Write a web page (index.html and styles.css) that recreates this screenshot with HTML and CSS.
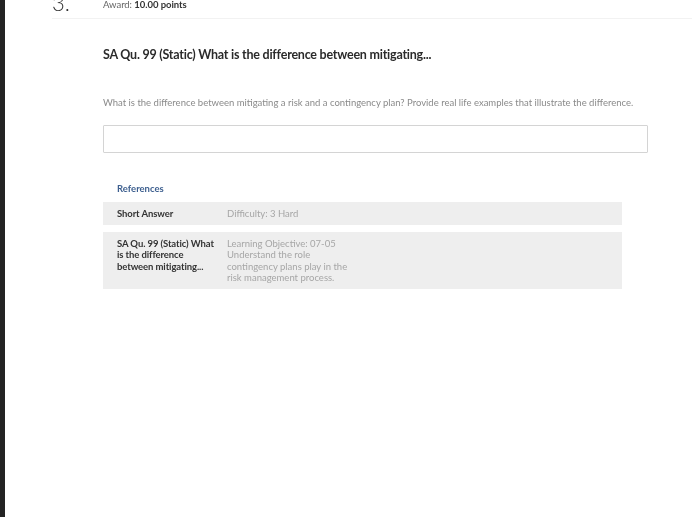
FILE: index.html
```html
<!DOCTYPE html>
<html lang="en">
<head>
    <meta charset="UTF-8">
    <meta name="viewport" content="width=device-width, initial-scale=1.0">
    <title>Question 3</title>
    <link rel="stylesheet" href="styles.css">
</head>
<body>
    <div class="sidebar"></div>
    <div class="page">
        <div class="header">
            <div class="number">3.</div>
            <div class="award">Award: <b>10.00 points</b></div>
        </div>

        <div class="content">
            <h1>SA Qu. 99 (Static) What is the difference between mitigating...</h1>
            <p class="question">What is the difference between mitigating a risk and a contingency plan? Provide real life examples that illustrate the difference.</p>
            <div class="answer"></div>

            <div class="references">
                <h2>References</h2>
                <div class="ref-row">
                    <div class="ref-name">Short Answer</div>
                    <div class="ref-info">Difficulty: 3 Hard</div>
                </div>
                <div class="ref-row">
                    <div class="ref-name">SA Qu. 99 (Static) What is the difference between mitigating...</div>
                    <div class="ref-info">Learning Objective: 07-05 Understand the role contingency plans play in the risk management process.</div>
                </div>
            </div>
        </div>
    </div>
</body>
</html>
```

FILE: styles.css
```css
html, body {
    height: 100%;
}
body {
    font-family: Lato, Arial, sans-serif;
    background-color: #fff;
    color: #333;
    margin: 0;
    padding: 0;
    display: flex;
    overflow: hidden;
}
.sidebar {
    width: 5px;
    flex-shrink: 0;
    background-color: #232323;
}
.page {
    flex: 1;
    filter: blur(0.5px);
}
.header {
    height: 18px;
    margin: 0 8px 0 47px;
    border-bottom: 1px solid #f2f2f2;
    display: flex;
    align-items: flex-end;
    overflow: hidden;
}
.number {
    width: 51px;
    font-size: 22px;
    font-weight: 300;
    line-height: 22px;
    margin-bottom: 4px;
    color: #333;
}
.award {
    font-size: 9.5px;
    letter-spacing: -0.05px;
    line-height: 12px;
    margin-bottom: 7px;
    color: #666;
}
.award b {
    color: #333;
}
.content {
    margin-left: 98px;
    width: 545px;
}
h1 {
    font-size: 12.5px;
    letter-spacing: -0.23px;
    line-height: 18px;
    font-weight: 700;
    color: #2b2b2b;
    margin: 27px 0 0;
}
.question {
    font-size: 9.5px;
    line-height: 12px;
    color: #8a8a8a;
    margin: 33px 0 0;
    white-space: nowrap;
}
.answer {
    height: 26px;
    border: 1px solid #d4d4d4;
    border-radius: 1px;
    margin-top: 16px;
}
.references {
    width: 519px;
    margin-top: 30px;
}
h2 {
    font-size: 9.5px;
    line-height: 12px;
    font-weight: 700;
    color: #3d5f8f;
    margin: 0 0 7px 14px;
}
.ref-row {
    display: flex;
    background-color: #eeeeee;
    padding: 6px 14px;
    margin-bottom: 7px;
    font-size: 9.5px;
    line-height: 11.2px;
}
.ref-name {
    width: 101px;
    margin-right: 9px;
    font-weight: 700;
    letter-spacing: -0.1px;
    color: #333;
}
.ref-info {
    width: 125px;
    color: #a6a6a6;
}
```
